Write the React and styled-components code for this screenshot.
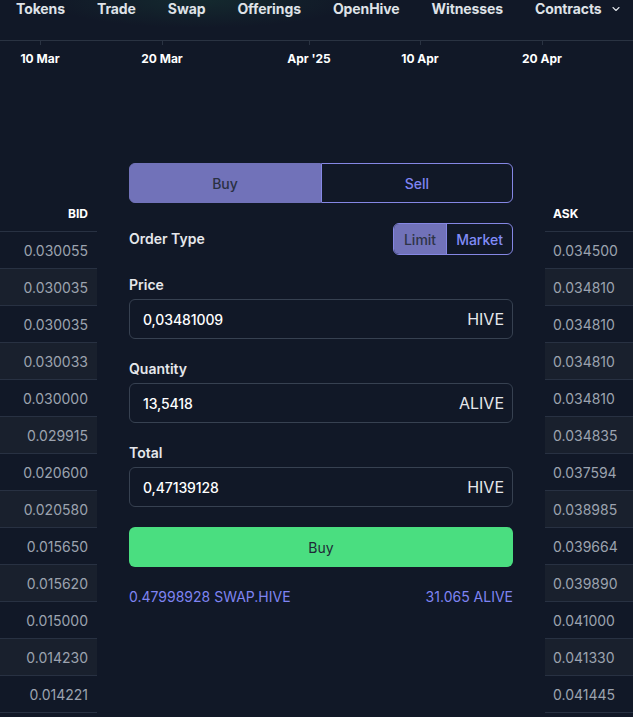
import React from "react";
import styled, { createGlobalStyle } from "styled-components";

const Global = createGlobalStyle`
  html, body { margin: 0; padding: 0; background: #111827; overflow: hidden; }
  body { font-family: Inter, "Noto Sans", sans-serif; color: #e5e7eb; }
  * { box-sizing: border-box; }
`;

const Page = styled.div`
  width: 633px;
  height: 717px;
  overflow: hidden;
  background: #111827;
`;

const Nav = styled.nav`
  height: 40px;
  display: flex;
  align-items: flex-start;
  gap: 32px;
  padding: 1px 16px 0;
  background: radial-gradient(ellipse 220px 40px at 200px 0px, rgba(34, 120, 80, 0.18), transparent 70%), #111827;
`;

const NavItem = styled.div`
  display: flex;
  align-items: center;
  gap: 8px;
  font-size: 14px;
  font-weight: 700;
  line-height: 16px;
  letter-spacing: -0.1px;
  color: #dfe2e7;
  white-space: nowrap;
`;

const Axis = styled.div`
  height: 123px;
`;

const Main = styled.div`
  display: grid;
  grid-template-columns: 97px 384px 88px;
  column-gap: 32px;
  align-items: start;
`;

const Book = styled.div`
  padding-top: 34px;
`;

const BookHeader = styled.div`
  height: 35px;
  display: flex;
  align-items: center;
  justify-content: ${(p) => (p.$side === "bid" ? "flex-end" : "flex-start")};
  padding: 0 9px 1px 8px;
  font-size: 12px;
  font-weight: 700;
  color: #ffffff;
  border-bottom: 1px solid #283142;
`;

const BookRow = styled.div`
  height: 37px;
  display: flex;
  align-items: center;
  justify-content: ${(p) => (p.$side === "bid" ? "flex-end" : "flex-start")};
  padding: 0 9px 0 8px;
  font-size: 14px;
  color: #9ca3af;
  background: ${(p) => (p.$alt ? "#19202d" : "#111827")};
  border-bottom: 1px solid #283142;
`;

const Form = styled.div`
  display: flex;
  flex-direction: column;
  gap: 20px;
`;

const Tabs = styled.div`
  display: grid;
  grid-template-columns: 1fr 1fr;
  height: 40px;
`;

const Tab = styled.div`
  display: flex;
  align-items: center;
  justify-content: center;
  font-size: 14px;
  font-weight: 500;
  border: 1px solid ${(p) => (p.$active ? "#7172b9" : "#8587e4")};
  background: ${(p) => (p.$active ? "#7172b9" : "transparent")};
  color: ${(p) => (p.$active ? "#2a3042" : "#7f84f2")};
  border-radius: ${(p) => (p.$first ? "6px 0 0 6px" : "0 6px 6px 0")};
`;

const Row = styled.div`
  display: flex;
  align-items: center;
  justify-content: space-between;
  height: 32px;
`;

const Label = styled.div`
  font-size: 14px;
  font-weight: 600;
  line-height: 20px;
  color: #e5e7eb;
`;

const Toggle = styled.div`
  display: flex;
  height: 32px;
  border: 1px solid #8587e4;
  border-radius: 6px;
  overflow: hidden;
`;

const ToggleItem = styled.div`
  display: flex;
  align-items: center;
  padding: 0 ${(p) => (p.$active ? "10px" : "9px")};
  font-size: 14px;
  font-weight: 500;
  background: ${(p) => (p.$active ? "#7172b9" : "transparent")};
  color: ${(p) => (p.$active ? "#2e3447" : "#818cf8")};
  border-left: ${(p) => (p.$active ? "none" : "1px solid #8587e4")};
`;

const Field = styled.div`
  display: flex;
  flex-direction: column;
  gap: 4px;
`;

const InputBox = styled.div`
  height: 40px;
  display: flex;
  align-items: center;
  justify-content: space-between;
  padding: 0 8px 0 13px;
  border: 1px solid #374151;
  border-radius: 6px;
  background: #111827;
`;

const Value = styled.span`
  font-size: 14px;
  font-weight: 500;
  letter-spacing: -0.1px;
  color: #ffffff;
`;

const Suffix = styled.span`
  font-size: 16px;
  color: #e5e7eb;
`;

const SubmitButton = styled.div`
  height: 40px;
  display: flex;
  align-items: center;
  justify-content: center;
  background: #4ade80;
  border-radius: 6px;
  font-size: 14px;
  color: #1f2937;
`;

const Balances = styled.div`
  display: flex;
  justify-content: space-between;
  line-height: 20px;
  font-size: 14px;
  color: #7f84f2;
`;

const bids = [
  "0.030055", "0.030035", "0.030035", "0.030033", "0.030000", "0.029915", "0.020600",
  "0.020580", "0.015650", "0.015620", "0.015000", "0.014230", "0.014221",
];
const asks = [
  "0.034500", "0.034810", "0.034810", "0.034810", "0.034810", "0.034835", "0.037594",
  "0.038985", "0.039664", "0.039890", "0.041000", "0.041330", "0.041445",
];

const navItems = ["Tokens", "Trade", "Swap", "Offerings", "OpenHive", "Witnesses"];
const ticks = [
  { x: 40, label: "10 Mar" },
  { x: 162, label: "20 Mar" },
  { x: 309, label: "Apr '25" },
  { x: 420, label: "10 Apr" },
  { x: 542, label: "20 Apr" },
];

export default function App() {
  return (
    <Page>
      <Global />
      <Nav>
        {navItems.map((n) => (
          <NavItem key={n}>{n}</NavItem>
        ))}
        <NavItem>
          Contracts
          <svg width="12" height="12" viewBox="0 0 24 24" fill="none" stroke="#dfe2e7" strokeWidth="2.2" strokeLinecap="round" strokeLinejoin="round">
            <path d="m6 9 6 6 6-6" />
          </svg>
        </NavItem>
      </Nav>
      <Axis>
        <svg width="633" height="40" viewBox="0 0 633 40">
          <line x1="0" y1="0.5" x2="633" y2="0.5" stroke="#2a3342" strokeWidth="1" />
          {ticks.map((t) => (
            <g key={t.label}>
              <line x1={t.x + 0.5} y1="0" x2={t.x + 0.5} y2="5" stroke="#2a3342" strokeWidth="1" />
              <text x={t.x} y="23" textAnchor="middle" fontFamily="Inter, sans-serif" fontSize="12" fontWeight="700" fill="#ffffff">
                {t.label}
              </text>
            </g>
          ))}
        </svg>
      </Axis>
      <Main>
        <Book>
          <BookHeader $side="bid">BID</BookHeader>
          {bids.map((v, i) => (
            <BookRow key={i} $side="bid" $alt={i % 2 === 1}>{v}</BookRow>
          ))}
        </Book>
        <Form>
          <Tabs>
            <Tab $active $first>Buy</Tab>
            <Tab>Sell</Tab>
          </Tabs>
          <Row>
            <Label>Order Type</Label>
            <Toggle>
              <ToggleItem $active>Limit</ToggleItem>
              <ToggleItem>Market</ToggleItem>
            </Toggle>
          </Row>
          <Field>
            <Label>Price</Label>
            <InputBox>
              <Value>0,03481009</Value>
              <Suffix>HIVE</Suffix>
            </InputBox>
          </Field>
          <Field>
            <Label>Quantity</Label>
            <InputBox>
              <Value>13,5418</Value>
              <Suffix>ALIVE</Suffix>
            </InputBox>
          </Field>
          <Field>
            <Label>Total</Label>
            <InputBox>
              <Value>0,47139128</Value>
              <Suffix>HIVE</Suffix>
            </InputBox>
          </Field>
          <SubmitButton>Buy</SubmitButton>
          <Balances>
            <span>0.47998928 SWAP.HIVE</span>
            <span>31.065 ALIVE</span>
          </Balances>
        </Form>
        <Book>
          <BookHeader $side="ask">ASK</BookHeader>
          {asks.map((v, i) => (
            <BookRow key={i} $side="ask" $alt={i % 2 === 1}>{v}</BookRow>
          ))}
        </Book>
      </Main>
    </Page>
  );
}
